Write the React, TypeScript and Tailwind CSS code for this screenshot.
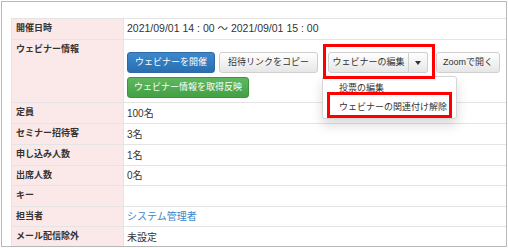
import React from 'react';

const font = { fontFamily: '"Liberation Sans", "Noto Sans CJK JP", sans-serif' };

const rows: { label: string; value?: React.ReactNode; h: string }[] = [
    { label: '定員', value: '100名', h: 'h-[21px]' },
    { label: 'セミナー招待客', value: '3名', h: 'h-[21px]' },
    { label: '申し込み人数', value: '1名', h: 'h-[21px]' },
    { label: '出席人数', value: '0名', h: 'h-[20px]' },
    { label: 'キー', value: '', h: 'h-[21px]' },
    { label: '担当者', value: <span className="text-[#3a86c8]">システム管理者</span>, h: 'h-[20px]' },
    { label: 'メール配信除外', value: '未設定', h: 'h-[21px]' },
];

function Label({ children, top = false }: { children: React.ReactNode; top?: boolean }) {
    return (
        <div
            className={`w-[112px] shrink-0 bg-[#fbe9e9] border-r border-[#e4e4e4] pl-[4px] text-[9px] font-bold text-[#333] flex ${top ? 'items-start pt-[3px]' : 'items-center'}`}
        >
            {children}
        </div>
    );
}

const grayBtn =
    'h-[21px] flex items-center justify-center rounded-[3px] border border-[#cfcfcf] bg-gradient-to-b from-[#ffffff] to-[#e6e6e6] text-[9px] text-[#333]';

export default function App() {
    return (
        <div className="w-[508px] h-[248px] bg-white p-px" style={font}>
            <div className="relative h-full border border-[#b8b8b8] overflow-hidden pl-[9px] pt-[16px]">
                <div className="border-t border-l border-[#e4e4e4]">
                    {/* 開催日時 */}
                    <div className="flex h-[21px] border-b border-[#e4e4e4]">
                        <Label>開催日時</Label>
                        <div className="flex items-center pl-[3px] text-[10.5px] text-[#333]">
                            2021/09/01 14 : 00 ～ 2021/09/01 15 : 00
                        </div>
                    </div>

                    {/* ウェビナー情報 */}
                    <div className="flex h-[63px] border-b border-[#e4e4e4]">
                        <Label top>ウェビナー情報</Label>
                        <div className="flex flex-col gap-[4px] pl-[3px] pt-[12px]">
                            <div className="flex items-center">
                                <div className="w-[88px] h-[21px] flex items-center justify-center rounded-[3px] border border-[#2b6aa6] bg-gradient-to-b from-[#3d88cc] to-[#2a6fb0] text-[9px] text-white">
                                    ウェビナーを開催
                                </div>
                                <div className={`${grayBtn} w-[99px] ml-[4px]`}>招待リンクをコピー</div>
                                <div className="relative flex ml-[10px]">
                                    <div className={`${grayBtn} w-[81px] rounded-r-none`}>ウェビナーの編集</div>
                                    <div className={`${grayBtn} w-[19px] rounded-l-none border-l-0`}>
                                        <span className="w-0 h-0 border-x-[3px] border-t-[4px] border-x-transparent border-t-[#333]" />
                                    </div>
                                    {/* dropdown menu */}
                                    <div className="absolute left-[-6px] top-[24px] z-10 w-[135px] h-[43px] rounded-[3px] border border-[#d6d6d6] bg-white shadow-[0_6px_12px_rgba(0,0,0,0.15)] pt-[3px] text-[9px] text-[#333]">
                                        <div className="h-[18px] flex items-center pl-[16px]">投票の編集</div>
                                        <div className="h-[20px] flex items-center pl-[16px]">ウェビナーの関連付け解除</div>
                                    </div>
                                </div>
                                <div className={`${grayBtn} w-[64px] ml-[8px]`}>Zoomで開く</div>
                            </div>
                            <div className="w-[122px] h-[21px] flex items-center justify-center rounded-[3px] border border-[#3d943d] bg-gradient-to-b from-[#5fb85f] to-[#44a044] text-[9px] text-white">
                                ウェビナー情報を取得反映
                            </div>
                        </div>
                    </div>

                    {rows.map((r) => (
                        <div key={r.label} className={`flex ${r.h} border-b border-[#e4e4e4]`}>
                            <Label>{r.label}</Label>
                            <div className="flex items-center pl-[3px] text-[10px] text-[#333]">{r.value}</div>
                        </div>
                    ))}
                </div>

                {/* annotation boxes */}
                <div className="absolute left-[321px] top-[42px] w-[112px] h-[35px] border-[3px] border-[#ff0000] z-20" />
                <div className="absolute left-[325px] top-[90px] w-[125px] h-[26px] border-[3px] border-[#ff0000] z-20" />
            </div>
        </div>
    );
}
